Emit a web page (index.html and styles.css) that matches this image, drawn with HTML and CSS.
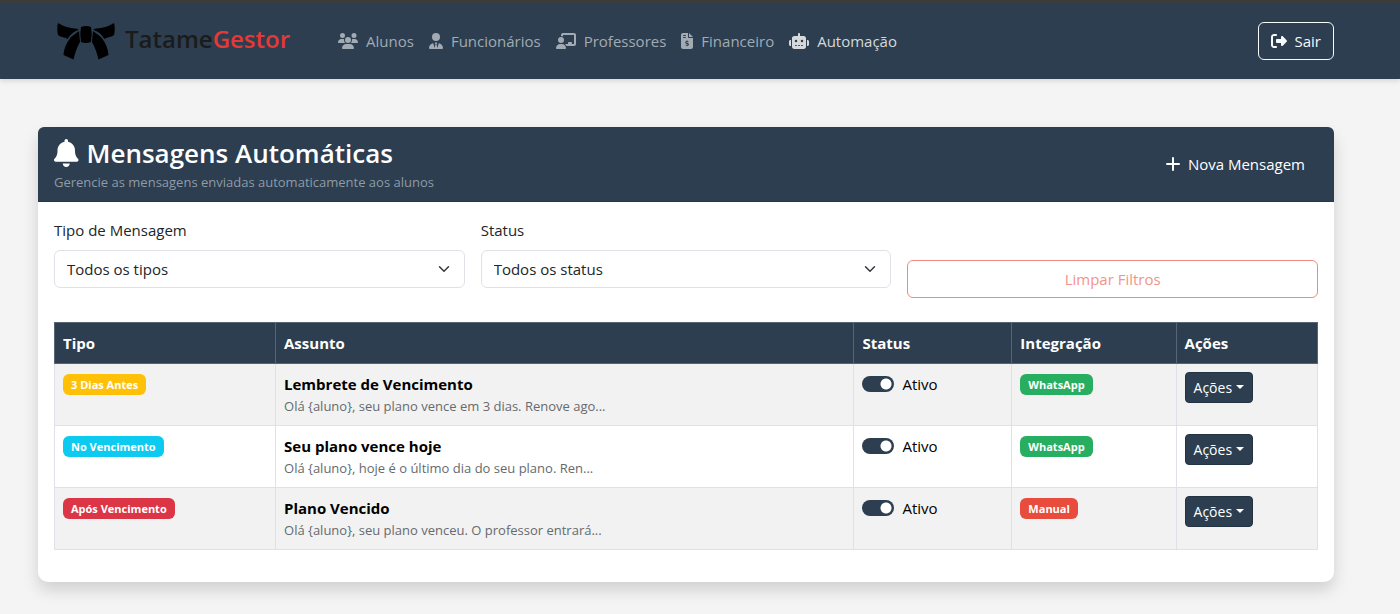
FILE: index.html
```html
<!DOCTYPE html>
<html lang="pt-BR">
<head>
<meta charset="utf-8">
<meta name="viewport" content="width=device-width, initial-scale=1">
<title>Mensagens Automáticas - TatameGestor</title>
<link rel="stylesheet" href="styles.css">
</head>
<body>
<header class="navbar">
  <a class="brand" href="#">
    <svg class="brand-icon" viewBox="0 0 58 38" aria-hidden="true">
      <path d="M1 1C7 5 14 6 21 7L21.500 8C16 10 13 13 11 17C7 15 3 15 1 13C0 9 0 5 1 1ZM57 1C51 5 44 6 37 7L36.500 8C42 10 45 13 47 17C51 15 55 15 57 13C58 9 58 5 57 1Z"/>
      <path d="M24 5Q29 3 34 5Q35.500 12 34 20Q29 22 24 20Q22.500 12 24 5Z"/>
      <path d="M22 9L23 20C20 25 18 31 16.500 37.500L6.500 33C7 26 10 20 14 15ZM36 9L35 20C38 25 40 31 41.500 37.500L51.500 33C51 26 48 20 44 15Z"/>
      <path class="brand-seam" d="M22 8.500Q14 11 11.500 17M36 8.500Q44 11 46.500 17"/>
    </svg>
    <span class="brand-name">Tatame<span class="brand-accent">Gestor</span></span>
  </a>
  <nav class="menu">
    <a class="menu-link" href="#">
      <svg class="icon" viewBox="0 0 640 512" aria-hidden="true"><path d="M144 0a80 80 0 1 1 0 160A80 80 0 1 1 144 0zM512 0a80 80 0 1 1 0 160A80 80 0 1 1 512 0zM0 298.700C0 239.800 47.800 192 106.700 192h42.700c15.900 0 31 3.500 44.600 9.700c-1.300 7.200-1.900 14.700-1.900 22.300c0 38.200 16.800 72.500 43.300 96H21.300C9.600 320 0 310.400 0 298.700zM405.300 320c26-23.500 42.700-57.800 42.700-96c0-7.600-.7-15-1.900-22.300c13.600-6.300 28.700-9.700 44.600-9.700h42.700C592.200 192 640 239.800 640 298.700c0 11.800-9.600 21.300-21.300 21.300H405.300zM224 224a96 96 0 1 1 192 0 96 96 0 1 1 -192 0zM128 485.300C128 411.700 187.700 352 261.300 352H378.700C452.300 352 512 411.700 512 485.300c0 14.700-11.900 26.700-26.700 26.700H154.700c-14.700 0-26.700-11.900-26.700-26.700z"/></svg>
      Alunos
    </a>
    <a class="menu-link" href="#">
      <svg class="icon" viewBox="0 0 448 512" aria-hidden="true"><path d="M96 128a128 128 0 1 0 256 0A128 128 0 1 0 96 128zm94.500 200.200l18.600 31L175.800 483.100l-36-146.900c-2-8.100-9.800-13.400-17.900-11.300C51.900 342.400 0 405.800 0 481.300c0 17 13.800 30.700 30.700 30.700H417.300c17 0 30.700-13.800 30.700-30.700c0-75.500-51.900-138.900-121.900-156.400c-8.100-2-15.900 3.300-17.900 11.300l-36 146.900L238.900 359.200l18.600-31c6.400-10.700-1.300-24.200-13.700-24.200H204.300c-12.400 0-20.100 13.600-13.700 24.200z"/></svg>
      Funcionários
    </a>
    <a class="menu-link" href="#">
      <svg class="icon" viewBox="0 0 640 512" aria-hidden="true"><path d="M160 64c0-35.300 28.700-64 64-64H576c35.300 0 64 28.700 64 64V352c0 35.300-28.700 64-64 64H336.800c-11.800-25.500-29.900-47.500-52.400-64H384V320c0-17.700 14.300-32 32-32h64c17.700 0 32 14.300 32 32v32h64V64L224 64v49.100C205.200 102.200 183.300 96 160 96V64zm0 64a96 96 0 1 1 0 192 96 96 0 1 1 0-192zM133.300 352h53.300C260.300 352 320 411.700 320 485.300c0 14.700-11.900 26.700-26.700 26.700H26.700C11.900 512 0 500.100 0 485.300C0 411.700 59.700 352 133.300 352z"/></svg>
      Professores
    </a>
    <a class="menu-link" href="#">
      <svg class="icon" viewBox="0 0 384 512" aria-hidden="true"><path d="M64 0C28.700 0 0 28.700 0 64V448c0 35.300 28.700 64 64 64H320c35.300 0 64-28.700 64-64V160H256c-17.700 0-32-14.300-32-32V0H64zM256 0V128H384L256 0zM64 80c0-8.800 7.200-16 16-16h64c8.800 0 16 7.200 16 16s-7.200 16-16 16H80c-8.800 0-16-7.200-16-16zm0 64c0-8.800 7.200-16 16-16h64c8.800 0 16 7.200 16 16s-7.200 16-16 16H80c-8.800 0-16-7.200-16-16z"/><path class="icon-cut" d="M236 282C205 267 150 264 150 300C150 342 236 322 236 364C236 400 180 398 147 379M192 240V272M192 390V424"/></svg>
      Financeiro
    </a>
    <a class="menu-link is-active" href="#" aria-current="page">
      <svg class="icon" viewBox="0 0 640 512" aria-hidden="true"><path d="M320 0c17.700 0 32 14.300 32 32V96H472c39.800 0 72 32.200 72 72V440c0 39.800-32.200 72-72 72H168c-39.800 0-72-32.200-72-72V168c0-39.800 32.200-72 72-72H288V32c0-17.700 14.300-32 32-32zM208 384c-8.800 0-16 7.200-16 16s7.200 16 16 16h32c8.800 0 16-7.200 16-16s-7.200-16-16-16H208zm96 0c-8.800 0-16 7.200-16 16s7.200 16 16 16h32c8.800 0 16-7.200 16-16s-7.200-16-16-16H304zm96 0c-8.800 0-16 7.200-16 16s7.200 16 16 16h32c8.800 0 16-7.200 16-16s-7.200-16-16-16H400zM264 256a40 40 0 1 0 -80 0 40 40 0 1 0 80 0zm152 40a40 40 0 1 0 0-80 40 40 0 1 0 0 80zM48 224H64V416H48c-26.500 0-48-21.500-48-48V272c0-26.500 21.500-48 48-48zm544 0c26.500 0 48 21.500 48 48v96c0 26.500-21.500 48-48 48H576V224h16z"/></svg>
      Automação
    </a>
  </nav>
  <button class="btn btn-logout" type="button">
    <svg class="icon" viewBox="0 0 512 512" aria-hidden="true"><path d="M377.900 105.900L500.700 228.700c7.200 7.200 11.300 17.100 11.300 27.300s-4.100 20.100-11.300 27.300L377.900 406.100c-6.400 6.400-15 9.900-24 9.900c-18.700 0-33.900-15.200-33.900-33.900l0-62.100-128 0c-17.700 0-32-14.300-32-32l0-64c0-17.700 14.300-32 32-32l128 0 0-62.100c0-18.700 15.200-33.900 33.900-33.900c9 0 17.600 3.600 24 9.900zM160 96L96 96c-17.700 0-32 14.300-32 32l0 256c0 17.700 14.300 32 32 32l64 0c17.700 0 32 14.300 32 32s-14.300 32-32 32l-64 0c-53 0-96-43-96-96L0 128C0 75 43 32 96 32l64 0c17.700 0 32 14.300 32 32s-14.300 32-32 32z"/></svg>
    Sair
  </button>
</header>

<main class="page">
  <section class="card">
    <div class="card-header">
      <div>
        <h1 class="card-title">
          <svg class="title-icon" viewBox="0 0 448 512" aria-hidden="true"><path d="M224 0c-17.700 0-32 14.300-32 32V51.200C119 66 64 130.600 64 208v18.800c0 47-17.300 92.400-48.500 127.600l-7.400 8.300c-8.400 9.400-10.400 22.900-5.300 34.400S19.400 416 32 416H416c12.600 0 24-7.400 29.200-18.900s3.100-25-5.300-34.400l-7.400-8.300C401.300 319.200 384 273.900 384 226.800V208c0-77.400-55-142-128-156.800V32c0-17.700-14.300-32-32-32zm45.300 493.300c12-12 18.700-28.300 18.700-45.300H160c0 17 6.700 33.300 18.700 45.300s28.300 18.700 45.300 18.700s33.300-6.700 45.300-18.700z"/></svg>
          Mensagens Automáticas
        </h1>
        <p class="card-subtitle">Gerencie as mensagens enviadas automaticamente aos alunos</p>
      </div>
      <button class="btn btn-new" type="button">
        <svg class="plus-icon" viewBox="0 0 14 14" aria-hidden="true"><path d="M7 1V13M1 7H13"/></svg>
        Nova Mensagem
      </button>
    </div>
    <div class="card-body">
      <form class="filters">
        <div class="field">
          <label for="tipo">Tipo de Mensagem</label>
          <select class="select" id="tipo"><option>Todos os tipos</option></select>
        </div>
        <div class="field">
          <label for="status">Status</label>
          <select class="select" id="status"><option>Todos os status</option></select>
        </div>
        <button class="btn btn-clear" type="reset">Limpar Filtros</button>
      </form>

      <table class="table">
        <colgroup>
          <col class="col-type"><col><col class="col-status"><col class="col-channel"><col class="col-actions">
        </colgroup>
        <thead>
          <tr><th scope="col">Tipo</th><th scope="col">Assunto</th><th scope="col">Status</th><th scope="col">Integração</th><th scope="col">Ações</th></tr>
        </thead>
        <tbody>
          <tr>
            <td><span class="badge badge-warning">3 Dias Antes</span></td>
            <td><strong class="subject">Lembrete de Vencimento</strong><small class="preview">Olá {aluno}, seu plano vence em 3 dias. Renove ago...</small></td>
            <td><label class="switch"><input type="checkbox" role="switch" checked>Ativo</label></td>
            <td><span class="badge badge-whatsapp">WhatsApp</span></td>
            <td><button class="btn btn-actions" type="button">Ações</button></td>
          </tr>
          <tr>
            <td><span class="badge badge-info">No Vencimento</span></td>
            <td><strong class="subject">Seu plano vence hoje</strong><small class="preview">Olá {aluno}, hoje é o último dia do seu plano. Ren...</small></td>
            <td><label class="switch"><input type="checkbox" role="switch" checked>Ativo</label></td>
            <td><span class="badge badge-whatsapp">WhatsApp</span></td>
            <td><button class="btn btn-actions" type="button">Ações</button></td>
          </tr>
          <tr>
            <td><span class="badge badge-danger">Após Vencimento</span></td>
            <td><strong class="subject">Plano Vencido</strong><small class="preview">Olá {aluno}, seu plano venceu. O professor entrará...</small></td>
            <td><label class="switch"><input type="checkbox" role="switch" checked>Ativo</label></td>
            <td><span class="badge badge-manual">Manual</span></td>
            <td><button class="btn btn-actions" type="button">Ações</button></td>
          </tr>
        </tbody>
      </table>
    </div>
  </section>
</main>
</body>
</html>
```
FILE: styles.css
```css
* { box-sizing: border-box; }

body {
  margin: 0;
  background: #f4f4f4;
  color: #212529;
  font: 15px/24px "Segoe UI", "Open Sans", "Noto Sans", sans-serif;
}

button, select { font: inherit; }

.navbar {
  display: flex;
  align-items: center;
  padding: 19px 66px 19px 57px;
  border-top: 3px solid #3c3c3c;
  background: #2c3e50;
  box-shadow: 0 2px 5px rgba(0, 0, 0, 0.12);
}

.brand {
  display: flex;
  align-items: center;
  gap: 10px;
  text-decoration: none;
}

.brand-icon { width: 58px; height: 38px; fill: #000; }
.brand-seam { fill: none; stroke: #2c3e50; stroke-width: 1; }

.brand-name {
  color: #1b1b1b;
  font-size: 24px;
  font-weight: 600;
  line-height: 32px;
  padding-bottom: 4px;
}

.brand-accent { color: #e53935; }

.menu {
  display: flex;
  flex: 1;
  gap: 15px;
  margin-left: 48px;
}

.menu-link {
  display: flex;
  align-items: center;
  gap: 8px;
  color: #a2abb3;
  text-decoration: none;
}

.menu-link.is-active { color: #d5d9dc; }

.icon { height: 16px; fill: currentColor; }
.icon-cut { fill: none; stroke: #2c3e50; stroke-width: 34; }

.btn {
  display: inline-flex;
  align-items: center;
  justify-content: center;
  gap: 8px;
  padding: 6px 12px;
  border: 1px solid transparent;
  border-radius: 6px;
  background: transparent;
  color: #fff;
  cursor: pointer;
}

.btn-logout { border-color: #f8f9fa; color: #f8f9fa; }

.page { padding: 48px 66px 32px 38px; }

.card {
  border-radius: 10px;
  background: #fff;
  box-shadow: 0 8px 16px rgba(0, 0, 0, 0.15);
}

.card-header {
  display: flex;
  align-items: center;
  justify-content: space-between;
  padding: 8px 16px;
  border-bottom: 1px solid #26374a;
  border-radius: 6px 6px 0 0;
  background: #2c3e50;
}

.card-title {
  display: flex;
  align-items: center;
  gap: 8px;
  margin: 0;
  color: #fff;
  font-size: 26px;
  font-weight: 600;
  line-height: 36px;
}

.title-icon { height: 28px; fill: currentColor; }

.card-subtitle {
  margin: 0;
  color: #8f9ba6;
  font-size: 13px;
  line-height: 22px;
}

.btn-new { font-weight: 500; }

.plus-icon {
  width: 14px;
  height: 14px;
  fill: none;
  stroke: currentColor;
  stroke-width: 2;
  stroke-linecap: round;
}

.card-body { padding: 16px 16px 32px; }

.filters {
  display: grid;
  grid-template-columns: repeat(3, 1fr);
  gap: 16px;
  margin-bottom: 24px;
}

.field {
  display: flex;
  flex-direction: column;
  gap: 8px;
  padding-bottom: 10px;
}

.select {
  width: 100%;
  height: 38px;
  padding: 6px 36px 6px 12px;
  border: 1px solid #dee2e6;
  border-radius: 6px;
  appearance: none;
  background: #fff url("data:image/svg+xml,%3csvg xmlns='http://www.w3.org/2000/svg' viewBox='0 0 16 16'%3e%3cpath fill='none' stroke='%23343a40' stroke-linecap='round' stroke-linejoin='round' stroke-width='2' d='m2 5 6 6 6-6'/%3e%3c/svg%3e") no-repeat right 12px center / 16px 12px;
  color: #212529;
}

.btn-clear {
  align-self: end;
  height: 38px;
  border-color: #f08a80;
  color: #f29489;
}

.table {
  width: 100%;
  border-collapse: collapse;
  table-layout: fixed;
  color: #000;
}

.col-type { width: 17.5%; }
.col-status { width: 12.5%; }
.col-channel { width: 13%; }
.col-actions { width: 11.2%; }

.table th,
.table td {
  padding: 8px;
  border: 1px solid #dee2e6;
  text-align: left;
  vertical-align: top;
}

.table th {
  border-color: #566573;
  background: #2c3e50;
  color: #fff;
  font-weight: 700;
}

.table tbody tr:nth-child(odd) { background: #f2f2f2; }

.subject, .preview { display: block; }

.preview {
  color: #666a6e;
  font-size: 13px;
  line-height: 21px;
}

.badge {
  display: block;
  width: fit-content;
  margin-top: 2px;
  padding: 4px 8px;
  border-radius: 6px;
  color: #fff;
  font-size: 11px;
  font-weight: 700;
  line-height: 13px;
}

.badge-warning { background: #ffc107; }
.badge-info { background: #0dcaf0; }
.badge-danger { background: #dc3545; }
.badge-whatsapp { background: #27ae60; }
.badge-manual { background: #e74c3c; }

.switch {
  display: flex;
  align-items: center;
  gap: 8px;
}

.switch input {
  width: 32px;
  height: 16px;
  margin: 0;
  border-radius: 8px;
  appearance: none;
  background: radial-gradient(circle at 24px 8px, #fff 5px, #2c3e50 6px);
}

.btn-actions {
  gap: 4px;
  padding: 4px 8px;
  border-color: #243342;
  border-radius: 4px;
  background: #2c3e50;
  font-size: 14px;
  line-height: 21px;
}

.btn-actions::after {
  content: "";
  margin-bottom: 2px;
  border-top: 4px solid currentColor;
  border-right: 4px solid transparent;
  border-left: 4px solid transparent;
}
```
